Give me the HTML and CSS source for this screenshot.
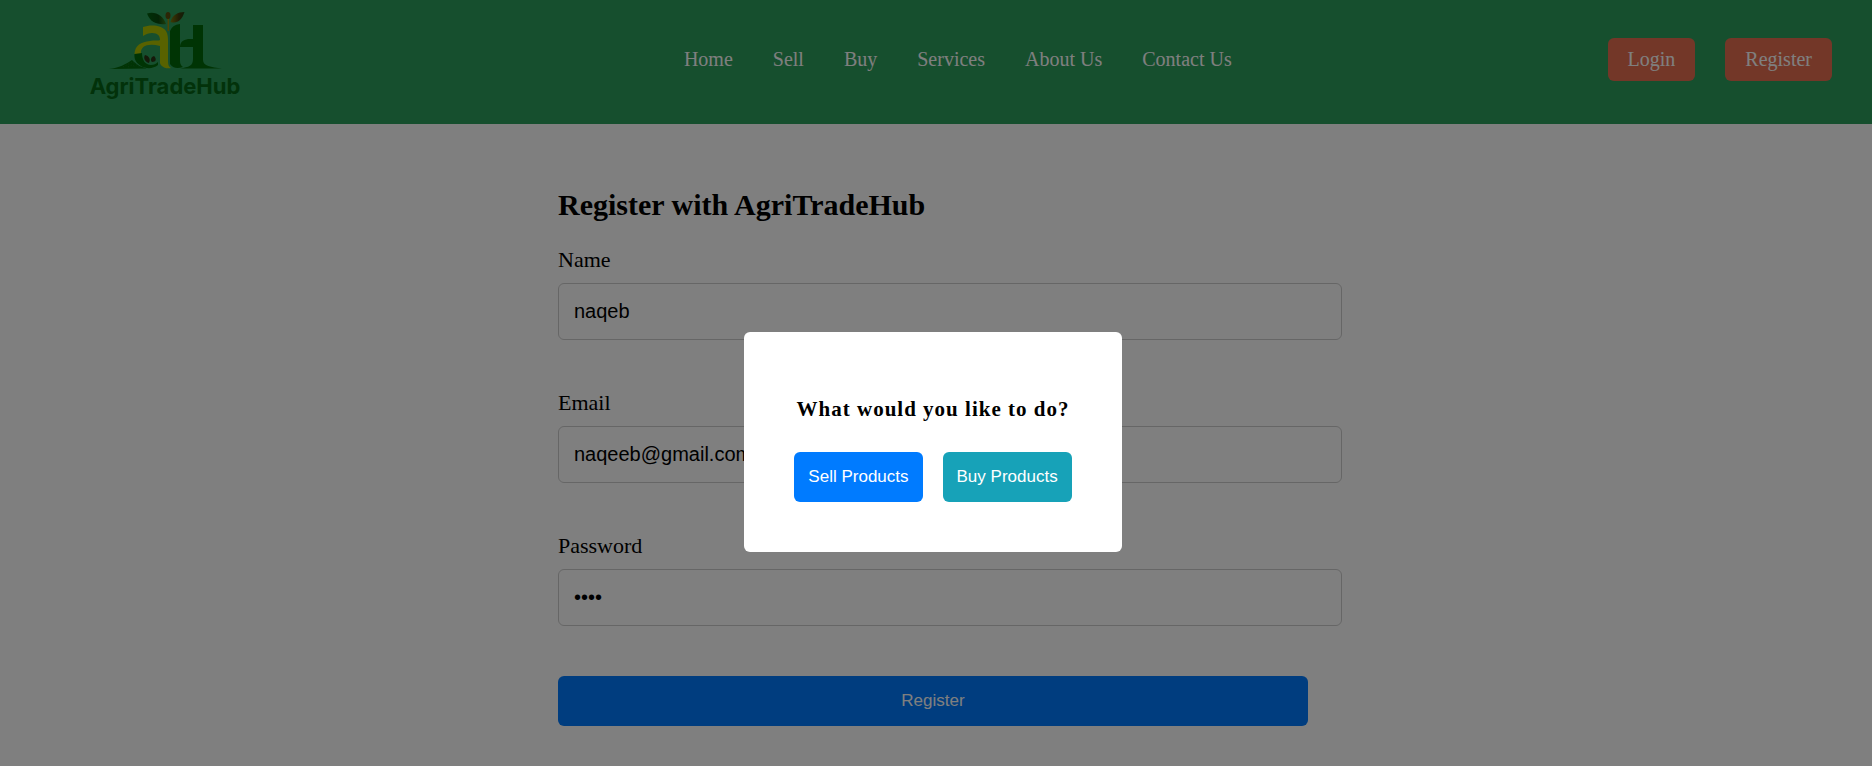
FILE: index.html
```html
<!DOCTYPE html>
<html lang="en">
<head>
<meta charset="utf-8">
<title>AgriTradeHub - Register</title>
<link rel="stylesheet" href="styles.css">
</head>
<body>
<header class="header">
  <a class="logo" href="#" aria-label="AgriTradeHub">
    <svg class="logo-image" viewBox="40 0 268 119" role="img">
      <defs>
        <linearGradient id="leaf-left"><stop offset="0" stop-color="#00600c"/><stop offset=".6" stop-color="#08480c"/><stop offset="1" stop-color="#3c7818"/></linearGradient>
        <linearGradient id="leaf-right"><stop offset="0" stop-color="#7c7808"/><stop offset=".6" stop-color="#403c0c"/><stop offset="1" stop-color="#203c10"/></linearGradient>
      </defs>
      <path fill="#006808" d="M109 69C119 68 126 64 132 60C136 64 140 67 147 68.500Z"/>
      <path fill="none" stroke="#1c6c28" stroke-width="1" stroke-dasharray="1 2" d="M123 67L132 62L140 67M128 67L132 65L136 67"/>
      <path fill="#b0c400" d="M143 27C149 25 161 24 166 31C168 34 168 38 168 42V61C168 65 169 67 171 68C166 69 161 67 160 63V46C148 43 140 46 141 54H134.500C135 45 141 42 150 41C154 40 159 41 160 40C160 36 158 33 152 33C149 33 146 34 143 36Z"/>
      <path fill="#006808" d="M134.500 54L142 53C142 60 145 65 151 65C154 65 156 64 158 62V65C153 69 146 69 141 66C136 63 134 59 134.500 54Z"/>
      <path fill="#2b3214" d="M145 55C149 56 151 59 149 63C145 62 143 58 145 55ZM154 56C157 59 156 62 152 62C150 60 151 57 154 56Z"/>
      <path fill="none" stroke="#988a08" stroke-width="1.500" d="M168.300 18V31"/>
      <ellipse cx="168" cy="15.500" rx="2.500" ry="3.500" fill="#584c0c"/>
      <path fill="url(#leaf-left)" d="M147 13.500C155 11 163 15 166 24C157 25 150 22 147 13.500Z"/>
      <path fill="url(#leaf-right)" d="M170.500 22C172 15 178 12 184.500 12C182 20 177 24 170.500 22Z"/>
      <path fill="#006808" d="M170 31Q172 25 180 24V61Q180 65 183 67Q174 70 170 64Z"/>
      <path fill="#006808" d="M193 25H203V60C203 66 211 67 222 68.500H180C189 67 193 66 193 59V47H180C180 41 185 39 190 39H193Z"/>
      <text class="logo-text" x="165" y="94" text-anchor="middle">AgriTradeHub</text>
    </svg>
  </a>
  <nav class="nav">
    <a href="#">Home</a>
    <a href="#">Sell</a>
    <a href="#">Buy</a>
    <a href="#">Services</a>
    <a href="#">About Us</a>
    <a href="#">Contact Us</a>
  </nav>
  <div class="account">
    <a class="account-link" href="#">Login</a>
    <a class="account-link" href="#">Register</a>
  </div>
</header>
<main class="main">
  <form class="form">
    <h2 class="form-title">Register with AgriTradeHub</h2>
    <label class="label" for="name">Name</label>
    <input class="input" id="name" type="text" value="naqeb">
    <label class="label" for="email">Email</label>
    <input class="input" id="email" type="email" value="naqeeb@gmail.com">
    <label class="label" for="password">Password</label>
    <input class="input" id="password" type="password" value="1234">
    <button class="button submit" type="button">Register</button>
  </form>
</main>
<div class="overlay">
  <div class="modal" role="dialog" aria-modal="true" aria-labelledby="modal-title">
    <h3 class="modal-title" id="modal-title">What would you like to do?</h3>
    <div class="modal-actions">
      <button class="button" type="button">Sell Products</button>
      <button class="button buy" type="button">Buy Products</button>
    </div>
  </div>
</div>
</body>
</html>
```

FILE: styles.css
```css
* {
  box-sizing: border-box;
}

body {
  margin: 0;
  background: #fff;
  color: #000;
  font-family: "Liberation Serif", "Times New Roman", serif;
}

.header {
  display: flex;
  align-items: center;
  justify-content: space-between;
  padding: 0 40px 5px;
  background: #2c9e5c;
  font-size: 20px;
  line-height: 23px;
}

.logo-image {
  display: block;
  width: 268px;
}

.logo-text {
  fill: #046414;
  font: bold 22px Inter, sans-serif;
}

.nav {
  display: flex;
  gap: 40px;
}

.nav a,
.account-link {
  color: #fff;
  text-decoration: none;
}

.account {
  display: flex;
  gap: 30px;
}

.account-link {
  padding: 10px 20px;
  border-radius: 6px;
  background: #e76f51;
}

.main {
  display: flex;
  justify-content: center;
  padding: 64px 6px 40px 0;
}

.form {
  width: 750px;
}

.form-title {
  margin: 0 0 25px;
  font-size: 30px;
  line-height: 34px;
}

.label {
  display: block;
  margin-bottom: 11px;
  font-size: 22px;
  line-height: 25px;
}

.input {
  display: block;
  width: calc(100% + 34px);
  height: 57px;
  margin-bottom: 50px;
  padding: 0 15px;
  border: 1px solid #ccc;
  border-radius: 6px;
  background: #fff;
  color: #000;
  font-family: "Liberation Sans", Arial, sans-serif;
  font-size: 20px;
}

.button {
  height: 50px;
  padding: 0 14px;
  border: 0;
  border-radius: 6px;
  background: #007bff;
  color: #fff;
  font-family: "Liberation Sans", Arial, sans-serif;
  font-size: 17px;
}

.submit {
  width: 100%;
}

.buy {
  background: #17a2b8;
}

.overlay {
  position: fixed;
  inset: 0;
  display: flex;
  align-items: center;
  justify-content: center;
  padding: 118px 6px 0 0;
  background: rgba(0, 0, 0, 0.5);
}

.modal {
  padding: 64px 50px 50px;
  border-radius: 6px;
  background: #fff;
}

.modal-title {
  margin: 0 0 30px;
  font-size: 21px;
  line-height: 26px;
  letter-spacing: 1px;
  text-align: center;
}

.modal-actions {
  display: flex;
  justify-content: center;
  gap: 20px;
}
```
